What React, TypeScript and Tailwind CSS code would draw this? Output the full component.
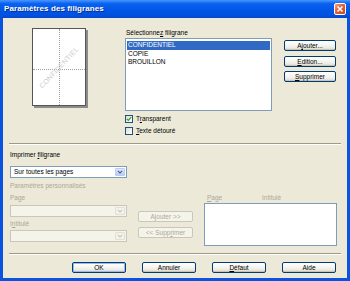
import React from "react";

const U = ({ children }: { children: React.ReactNode }) => (
  <span className="underline decoration-[0.5px] underline-offset-[0.5px]">{children}</span>
);

function Btn({
  children,
  w,
  disabled,
  def,
  className = "",
}: {
  children: React.ReactNode;
  w: string;
  disabled?: boolean;
  def?: boolean;
  className?: string;
}) {
  if (disabled) {
    return (
      <div
        className={`${w} h-[11px] rounded-[2px] border border-[#C9C7BA] bg-[#F5F4EA] text-[#ACA899] flex items-center justify-center leading-[9px] ${className}`}
      >
        <span className="whitespace-nowrap">{children}</span>
      </div>
    );
  }
  return (
    <div
      className={`${w} h-[11px] rounded-[2px] border border-[#003C74] bg-[#F4F3EE] bg-[linear-gradient(to_bottom,#FFFFFF_0%,#F6F5F1_45%,#ECEAE2_75%,#D6D0C5_100%)] text-black flex items-center justify-center leading-[9px] ${
        def ? "shadow-[inset_0_0_0_1px_#9DB9EB]" : "shadow-[inset_0_-1px_0_#C9C4B6]"
      } ${className}`}
    >
      <span className="whitespace-nowrap">{children}</span>
    </div>
  );
}

function Check({ checked }: { checked?: boolean }) {
  return (
    <div className="w-[8px] h-[8px] border border-[#1C5180] bg-[#F0F0EC] bg-[linear-gradient(135deg,#DCDCD6,#FFFFFF)] flex items-center justify-center">
      {checked && (
        <svg width="6" height="6" viewBox="0 0 6 6">
          <path d="M0.8 2.8 L2.3 4.3 L5.2 1.2" stroke="#21A121" strokeWidth="1.2" fill="none" />
        </svg>
      )}
    </div>
  );
}

function Combo({ text, disabled }: { text?: string; disabled?: boolean }) {
  return (
    <div
      className={`w-[117px] h-[12px] border flex items-stretch ${
        disabled ? "border-[#C9C7BA] bg-[#F5F4EA]" : "border-[#7F9DB9] bg-white"
      }`}
    >
      <div className="flex-1 pl-[3px] flex items-center text-black">{text}</div>
      <div
        className={`w-[10px] m-[1px] rounded-[1px] flex items-center justify-center border ${
          disabled
            ? "bg-[#F2F1EC] border-[#E2E0D6]"
            : "bg-[#C8D8FB] bg-[linear-gradient(to_bottom,#DDE8FE,#B8CCF8)] border-[#B9CCF7]"
        }`}
      >
        <svg width="6" height="4" viewBox="0 0 6 4">
          <path
            d="M0.8 0.8 L3 3 L5.2 0.8"
            stroke={disabled ? "#C9C7BA" : "#4D6185"}
            strokeWidth="1.1"
            fill="none"
          />
        </svg>
      </div>
    </div>
  );
}

function Separator() {
  return <div className="mx-[6px] h-[2px] border-t border-[#9D9A8C] border-b border-b-white" />;
}

export default function App() {
  return (
    <div className="w-[350px] h-[281px] bg-[#0A52E0] flex flex-col font-['Liberation_Sans',Arial,sans-serif] text-[6.5px] leading-[10px] text-black overflow-hidden">
      {/* Title bar */}
      <div className="h-[18px] shrink-0 flex items-center justify-between bg-[#0056E6] bg-[linear-gradient(to_bottom,#4A97FF_0%,#0A62F0_20%,#0056E6_55%,#0050DE_85%,#0346CC_100%)] pl-[4px] pr-[4px]">
        <div className="text-white font-bold text-[8px] [text-shadow:1px_1px_0_#0A2A8A] tracking-[0.1px]">
          Paramètres des filigranes
        </div>
        <div className="w-[12px] h-[12px] rounded-[2px] border border-white bg-[#E0542F] bg-[linear-gradient(135deg,#F0A486_0%,#E2603A_45%,#CC4620_100%)] flex items-center justify-center">
          <svg width="8" height="8" viewBox="0 0 8 8">
            <path d="M1.5 1.5 L6.5 6.5 M6.5 1.5 L1.5 6.5" stroke="white" strokeWidth="1.5" />
          </svg>
        </div>
      </div>

      {/* Body */}
      <div className="flex-1 mx-[3px] mb-[3px] bg-[#ECE9D8] flex flex-col">
        {/* Top section */}
        <div className="h-[115px] mt-[10px] flex">
          {/* preview */}
          <div className="ml-[29px] w-[56px] h-[80px]">
            <div className="relative w-[54px] h-[78px] bg-white border border-[#555] shadow-[2px_2px_0_#8C8C8C] overflow-hidden">
              <div className="absolute left-[26px] top-0 bottom-0 border-l border-dotted border-[#A0A0A0]" />
              <div className="absolute top-[40px] left-0 right-0 border-t border-dotted border-[#A0A0A0]" />
              <div className="absolute inset-0 flex items-center justify-center">
                <div className="-rotate-[47deg] text-[7px] leading-none text-[#C9C9C9] tracking-[0.2px]">
                  CONFIDENTIEL
                </div>
              </div>
            </div>
          </div>

          {/* list */}
          <div className="ml-[37px] w-[147px] flex flex-col">
            <div className="h-[10px] pl-[1px]">
              Sélectionne<U>z</U> filigrane
            </div>
            <div className="h-[73px] border border-[#7F9DB9] bg-white p-[1px] pt-[2px] flex flex-col leading-[8.5px]">
              <div className="bg-[#316AC5] text-white pl-[1px]">CONFIDENTIEL</div>
              <div className="pl-[1px]">COPIE</div>
              <div className="pl-[1px]">BROUILLON</div>
            </div>
            <div className="mt-[4px] flex items-center gap-[3px] h-[8px]">
              <Check checked />
              <span>
                T<U>r</U>ansparent
              </span>
            </div>
            <div className="mt-[4px] flex items-center gap-[3px] h-[8px]">
              <Check />
              <span>
                <U>T</U>exte détouré
              </span>
            </div>
          </div>

          {/* buttons */}
          <div className="ml-[12px] w-[52px] flex flex-col">
            <Btn w="w-[52px]" className="mt-[12px]">
              A<U>j</U>outer...
            </Btn>
            <Btn w="w-[52px]" className="mt-[5px]">
              <U>E</U>dition...
            </Btn>
            <Btn w="w-[52px]" className="mt-[4px]">
              <U>S</U>upprimer
            </Btn>
          </div>
        </div>

        <Separator />

        {/* Bottom section */}
        <div className="ml-[7px] flex flex-col">
          <div className="mt-[5px] h-[10px]">
            Imprimer <U>f</U>iligrane
          </div>
          <div className="mt-[6px]">
            <Combo text="Sur toutes les pages" />
          </div>
          <div className="mt-[3px] h-[10px] text-[#ACA899]">Paramètres personnalisés</div>
          <div className="mt-[2px] flex">
            <div className="w-[117px] flex flex-col text-[#ACA899]">
              <div className="h-[10px]">Page</div>
              <div className="mt-[2px]">
                <Combo disabled />
              </div>
              <div className="mt-[2px] h-[10px]">
                I<U>n</U>titulé
              </div>
              <div className="mt-[1px]">
                <Combo disabled />
              </div>
            </div>
            <div className="ml-[11px] w-[55px] flex flex-col">
              <Btn w="w-[55px]" disabled className="mt-[18px]">
                Ajouter &gt;&gt;
              </Btn>
              <Btn w="w-[55px]" disabled className="mt-[5px]">
                &lt;&lt; Supp<U>r</U>imer
              </Btn>
            </div>
            <div className="ml-[11px] w-[133px] flex flex-col">
              <div className="h-[10px] flex text-[#ACA899]">
                <div className="w-[58px] pl-[3px]">
                  <U>P</U>age
                </div>
                <div>Intitulé</div>
              </div>
              <div className="h-[43px] border border-[#7F9DB9] bg-white" />
            </div>
          </div>
        </div>

        <div className="mt-[7px]">
          <Separator />
        </div>

        <div className="mt-[7px] ml-[69px] flex gap-[16px]">
          <Btn w="w-[54px]" def>
            OK
          </Btn>
          <Btn w="w-[54px]">Annuler</Btn>
          <Btn w="w-[54px]">
            <U>D</U>éfaut
          </Btn>
          <Btn w="w-[54px]">Aide</Btn>
        </div>
      </div>
    </div>
  );
}
